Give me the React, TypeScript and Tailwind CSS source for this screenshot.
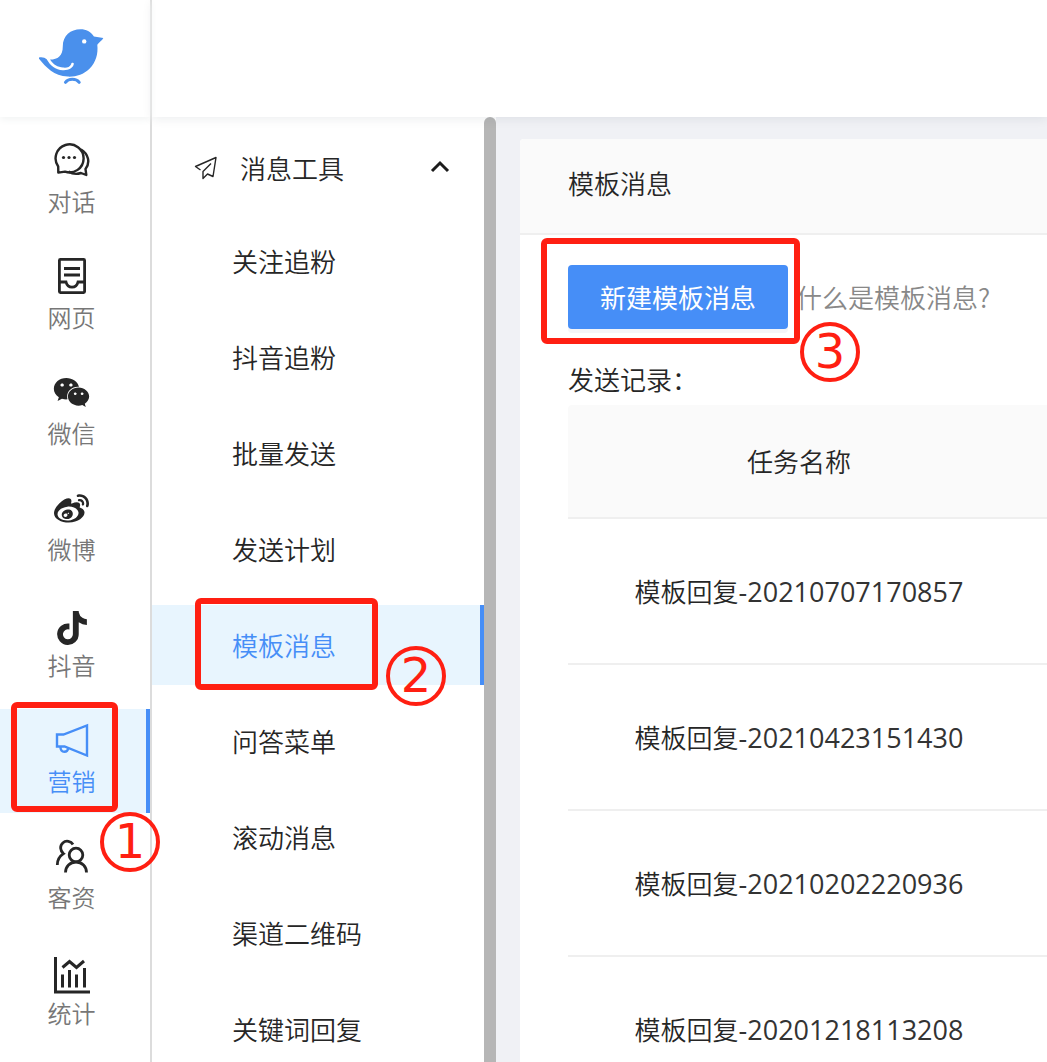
import React from "react";
import { FaTiktok, FaWeibo, FaWeixin } from "react-icons/fa";

const ChatIcon = () => (
  <svg width="36" height="36" viewBox="0 0 36 36" fill="none" stroke="currentColor" strokeWidth="2.4">
    <path d="M4.2 24.5A14 14 0 1 1 11 29.6L4.3 30.6Z" strokeLinejoin="round" />
    <path d="M27 7.5c7.5 4.500 9.500 13 4.500 19.500l.8 6-5.300-2c-4.500 1.500-9 .8-12.500-1.500" strokeLinejoin="round" />
    <g fill="currentColor" stroke="none">
      <circle cx="9.500" cy="15.500" r="1.600" />
      <circle cx="15" cy="15.500" r="1.600" />
      <circle cx="20.500" cy="15.500" r="1.600" />
    </g>
  </svg>
);

const PageIcon = () => (
  <svg width="36" height="36" viewBox="0 0 36 36" fill="none" stroke="currentColor" strokeWidth="2.8">
    <rect x="5.400" y="1.400" width="25.200" height="33.200" rx="1" />
    <path d="M10 10.500h16M10 17h16" />
    <path d="M5.500 24h6.500c.8 3.300 3 5.200 6 5.200s5.200-1.900 6-5.200h6.500" />
  </svg>
);

const HornIcon = () => (
  <svg width="36" height="36" viewBox="0 0 36 36" fill="none" stroke="currentColor" strokeWidth="2.4">
    <path d="M3 12.500h6.500L33 3.500v30L10.500 24.500H3Z" />
    <path d="M6.500 25c-.2 3 1.500 4.800 3.800 4.800s3.700-1.300 3.900-3.600" />
  </svg>
);

const UsersIcon = () => (
  <svg width="36" height="36" viewBox="0 0 36 36" fill="none" stroke="currentColor" strokeWidth="2.8">
    <circle cx="22" cy="17" r="6.800" />
    <path d="M11.500 34.500c0-6 4.500-10.500 10.500-10.500s10.500 4.500 10.500 10.500" />
    <path d="M19 6.500c-2-3.500-7-4.500-10-1.800-3.500 3-3 8 .5 11C6 18 3.300 22 3.300 27" />
  </svg>
);

const StatsIcon = () => (
  <svg className="mt-1" width="36" height="40" viewBox="0 0 36 40" fill="none" stroke="currentColor" strokeWidth="3">
    <path d="M1.500 3v35H36" />
    <path d="M8.500 20.500v13M15.500 16v17.500M22.500 20.500v13M30.500 14v19.500" />
    <path d="M8.500 13.500l7-6 7 6 7.500-6.500" />
  </svg>
);

const BirdLogo = () => (
  <svg width="65" height="55" viewBox="117 86 194 164" role="img" aria-label="logo">
    <path
      fill="#4a90ec"
      d="M117 171C127 169 135 172 140 176C151 196 166 207 188 209C205 210 219 203 221 190C220 185 213 186 213 191C209 200 200 202 189 201C173 200 159 192 150 177C173 177 188 166 188 138C188 106 211 87 241 87C258 87 271 94 281 108L309 113C306 120 296 126 291 133C294 160 287 186 267 205C250 221 228 229 203 228C161 227 139 201 117 175Z"
    />
    <circle cx="252" cy="123" r="6.500" fill="#fff" />
    <path d="M196 245c9-12 32-12 41 0" fill="none" stroke="#4a90ec" strokeWidth="9" strokeLinecap="round" />
  </svg>
);

const PlaneIcon = () => (
  <svg width="24" height="24" viewBox="0 0 24 24" fill="none" stroke="currentColor" strokeWidth="1.400" strokeLinejoin="round">
    <path d="M6.500 14 1.500 10.500 22 1.500 19 20.500l-5.500-2.500-4.500 4.500V15.500L17 7.500" />
  </svg>
);

const sideLinks = [
  { name: "对话", icon: <ChatIcon /> },
  { name: "网页", icon: <PageIcon /> },
  { name: "微信", icon: <FaWeixin size={37} /> },
  { name: "微博", icon: <FaWeibo size={35} className="mt-0.5" /> },
  { name: "抖音", icon: <FaTiktok size={34} className="mt-2" /> },
  { name: "营销", icon: <HornIcon /> },
  { name: "客资", icon: <UsersIcon /> },
  { name: "统计", icon: <StatsIcon /> },
];

const toolLinks = [
  "关注追粉",
  "抖音追粉",
  "批量发送",
  "发送计划",
  "模板消息",
  "问答菜单",
  "滚动消息",
  "渠道二维码",
  "关键词回复",
];

const records = ["20210707170857", "20210423151430", "20210202220936", "20201218113208"];

const Step = ({ n, frame, spot }: { n: number; frame: string; spot: string }) => (
  <>
    <span className={`pointer-events-none absolute z-20 rounded-md border-6 border-[#ff1f12] ${frame}`} />
    <span
      className={`pointer-events-none absolute z-20 flex size-15 items-center justify-center rounded-full border-4 border-[#ff1f12] pb-0.5 font-['DejaVu_Sans',sans-serif] text-5xl leading-none font-normal text-[#ff1f12] ${spot}`}
    >
      {n}
    </span>
  </>
);

const SideBar = () => (
  <aside className="relative z-20 w-[152px] shrink-0 border-r-2 border-[#dcdcdc]">
    <div className="flex h-[117px] items-center justify-center pr-2 pb-1 shadow-[0_2px_8px_#f0f2f2]">
      <BirdLogo />
    </div>
    <nav className="flex flex-col gap-3 pt-3">
      {sideLinks.map((item) => {
        const active = item.name === "营销";
        return (
          <div key={item.name} className="relative">
            <a
              href="#"
              className={`flex h-26 flex-col items-center border-r-4 pt-[11px] pr-[3px] ${
                active ? "border-[#468ef7] bg-[#e8f5fe] text-[#468ef7]" : "border-transparent text-[#262626]"
              }`}
            >
              <span className="flex size-10 items-center justify-center">{item.icon}</span>
              <span className={`text-2xl leading-[42px] ${active ? "" : "text-[#777]"}`}>{item.name}</span>
            </a>
            {active && <Step n={1} frame="-top-[7px] left-[11px] h-[110px] w-[107px]" spot="top-[103px] left-[100px]" />}
          </div>
        );
      })}
    </nav>
  </aside>
);

const ToolMenu = () => (
  <nav className="w-[332px] shrink-0 pt-[11px]">
    <button className="flex h-20 w-full items-center pr-8 pl-[42px] text-left">
      <PlaneIcon />
      <span className="ml-[22px] flex-1">消息工具</span>
      <svg width="24" height="24" viewBox="0 0 24 24" fill="none" stroke="#1c1c1c" strokeWidth="3">
        <path d="M4 15 12 7l8 8" />
      </svg>
    </button>
    <ul className="flex flex-col gap-4 pt-[13px]">
      {toolLinks.map((name) => {
        const active = name === "模板消息";
        return (
          <li key={name} className="relative">
            <a
              href="#"
              className={`flex h-20 items-center border-r-4 pl-20 ${
                active ? "border-[#468ef7] bg-[#e8f5fe] text-[#468ef7]" : "border-transparent"
              }`}
            >
              {name}
            </a>
            {active && <Step n={2} frame="-top-[7px] left-[43px] h-[92px] w-[183px]" spot="top-[41px] left-[234px]" />}
          </li>
        );
      })}
    </ul>
  </nav>
);

const RecordTable = () => (
  <table className="w-full table-fixed border-separate border-spacing-0 text-center">
    <thead>
      <tr className="h-[114px] bg-[#fafafa]">
        <th className="w-[462px] rounded-tl border-b-2 border-[#efefef] font-[350]">任务名称</th>
        <th className="border-b-2 border-[#efefef]" />
      </tr>
    </thead>
    <tbody>
      {records.map((id) => (
        <tr key={id} className="h-[146px]">
          <td className="border-b-2 border-[#efefef]">
            模板回复
            <span className="font-['Open_Sans',sans-serif] text-[27px] font-normal text-[#333]">-{id}</span>
          </td>
          <td className="border-b-2 border-[#efefef]" />
        </tr>
      ))}
    </tbody>
  </table>
);

const App = () => {
  return (
    <div className="flex h-screen overflow-hidden bg-white font-['Noto_Sans_CJK_SC',sans-serif] text-[26px] leading-10 font-[350] text-[#262626]">
      <SideBar />
      <div className="flex min-w-0 flex-1 flex-col">
        <header className="relative z-10 h-[117px] shrink-0 bg-white shadow-[0_2px_10px_#0e2a3014]" />
        <div className="flex min-h-0 flex-1">
          <ToolMenu />
          <div className="w-3 shrink-0 rounded-t-full bg-[#b6b6b6]" />
          <main className="min-w-0 flex-1 bg-[#f0f1f5] pt-[22px] pl-6">
            <section className="rounded-tl bg-white">
              <h1 className="flex h-24 items-center rounded-tl border-b-2 border-[#efefef] bg-[#fafafa] px-12 pb-1.5">
                模板消息
              </h1>
              <div className="pt-[30px] pl-12">
                <div className="flex items-center gap-2">
                  <div className="relative">
                    <button className="h-16 w-[220px] rounded bg-[#468ef7] font-normal text-white shadow-[0_4px_0_#f5f5f8]">
                      新建模板消息
                    </button>
                    <Step n={3} frame="-top-[27px] -left-[27px] h-[106px] w-[259px]" spot="top-[57px] left-[232px]" />
                  </div>
                  <a href="#" className="whitespace-nowrap text-[#888]">
                    什么是模板消息?
                  </a>
                </div>
                <p className="pt-[30px] pb-1.5">发送记录：</p>
                <RecordTable />
              </div>
            </section>
          </main>
        </div>
      </div>
    </div>
  );
};

export default App;
